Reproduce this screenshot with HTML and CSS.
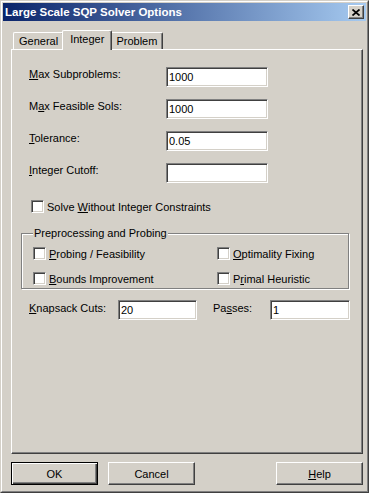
FILE: index.html
```html
<!DOCTYPE html>
<html lang="en">
<head>
    <meta charset="UTF-8">
    <title>Large Scale SQP Solver Options</title>
    <link rel="stylesheet" href="styles.css">
</head>
<body>
<div class="window">
    <div class="frame">
        <div class="titlebar">
            <span class="title">Large Scale SQP Solver Options</span>
            <span class="close-btn">
                <svg width="8" height="7" viewBox="0 0 8 7"><path d="M0.5 0.5 L7.5 6.5 M7.5 0.5 L0.5 6.5" stroke="#000" stroke-width="1.7"/></svg>
            </span>
        </div>

        <div class="content">
            <!-- Tabs -->
            <div class="tabs">
                <div class="tab">General</div>
                <div class="tab active">Integer</div>
                <div class="tab">Problem</div>
            </div>

            <div class="panel">
                <div class="fields">
                    <div class="field-row">
                        <span class="field-label"><u>M</u>ax Subproblems:</span>
                        <div class="input">1000</div>
                    </div>
                    <div class="field-row">
                        <span class="field-label">M<u>a</u>x Feasible Sols:</span>
                        <div class="input">1000</div>
                    </div>
                    <div class="field-row">
                        <span class="field-label"><u>T</u>olerance:</span>
                        <div class="input">0.05</div>
                    </div>
                    <div class="field-row">
                        <span class="field-label"><u>I</u>nteger Cutoff:</span>
                        <div class="input"></div>
                    </div>
                </div>

                <label class="check solo"><span class="box"></span><span>Solve <u>W</u>ithout Integer Constraints</span></label>

                <!-- Preprocessing group -->
                <fieldset class="group">
                    <legend>Preprocessing and Probing</legend>
                    <div class="group-grid">
                        <label class="check"><span class="box"></span><span><u>P</u>robing / Feasibility</span></label>
                        <label class="check"><span class="box"></span><span><u>O</u>ptimality Fixing</span></label>
                        <label class="check"><span class="box"></span><span><u>B</u>ounds Improvement</span></label>
                        <label class="check"><span class="box"></span><span>P<u>r</u>imal Heuristic</span></label>
                    </div>
                </fieldset>

                <div class="cuts-row">
                    <span class="cuts-label"><u>K</u>napsack Cuts:</span>
                    <div class="input cuts-input">20</div>
                    <span class="passes-label">Pa<u>s</u>ses:</span>
                    <div class="input passes-input">1</div>
                </div>
            </div>

            <div class="buttons">
                <button class="btn default">OK</button>
                <button class="btn">Cancel</button>
                <button class="btn help"><u>H</u>elp</button>
            </div>
        </div>
    </div>
</div>
</body>
</html>
```

FILE: styles.css
```css
* {
    box-sizing: border-box;
}
body {
    margin: 0;
    font-family: "Liberation Sans", Arial, sans-serif;
    font-size: 11px;
    color: #000;
    background-color: #d4d0c8;
}

/* Window frame */
.window {
    width: 369px;
    height: 493px;
    background-color: #d4d0c8;
    border: 1px solid;
    border-color: #d4d0c8 #404040 #404040 #d4d0c8;
}
.frame {
    height: 100%;
    border: 1px solid;
    border-color: #fff #808080 #808080 #fff;
    padding: 1px;
    display: flex;
    flex-direction: column;
}
.titlebar {
    height: 18px;
    display: flex;
    align-items: center;
    justify-content: space-between;
    padding: 0 2px;
    background: linear-gradient(to right, #0a246a, #a6caf0);
    color: #fff;
    font-size: 11.5px;
    font-weight: bold;
}
.close-btn {
    width: 16px;
    height: 14px;
    display: flex;
    align-items: center;
    justify-content: center;
    background-color: #d4d0c8;
    border: 1px solid;
    border-color: #fff #404040 #404040 #fff;
    box-shadow: inset -1px -1px #808080;
}
.content {
    flex: 1;
    display: flex;
    flex-direction: column;
    padding: 9px 3px 5px 8px;
}

/* Tabs */
.tabs {
    display: flex;
    align-items: flex-end;
    height: 19px;
    padding-left: 2px;
}
.tab {
    height: 17px;
    padding: 1px 5px 1px;
    line-height: 14px;
    border: 1px solid;
    border-bottom: none;
    border-color: #fff #404040 #404040 #fff;
    border-radius: 2px 2px 0 0;
    box-shadow: inset -1px 0 #808080;
}
.tab.active {
    position: relative;
    z-index: 1;
    height: 20px;
    margin: 0 -2px -1px;
    padding: 1px 7px 4px;
    background-color: #d4d0c8;
}
.panel {
    flex: 1;
    border: 1px solid;
    border-color: #fff #404040 #404040 #fff;
    box-shadow: inset -1px -1px #808080;
    padding: 17px 0 0 9px;
}

/* Text fields */
.fields {
    display: flex;
    flex-direction: column;
    gap: 12px;
}
.field-row {
    display: flex;
    align-items: flex-start;
    padding-left: 8px;
}
.field-label {
    width: 137px;
    line-height: 14px;
}
.input {
    width: 102px;
    height: 20px;
    background-color: #fff;
    border: 1px solid;
    border-color: #808080 #fff #fff #808080;
    box-shadow: inset 1px 1px #404040, inset -1px -1px #d4d0c8;
    padding: 0 1px 0 2px;
    line-height: 18px;
}

/* Checkboxes */
.check {
    display: flex;
    align-items: center;
    height: 13px;
    line-height: 14px;
    white-space: nowrap;
}
.check.solo {
    margin-top: 17px;
    padding-left: 10px;
}
.box {
    width: 13px;
    height: 13px;
    margin-right: 3px;
    background-color: #fff;
    border: 1px solid;
    border-color: #808080 #fff #fff #808080;
    box-shadow: inset 1px 1px #404040, inset -1px -1px #d4d0c8;
}

/* Group box */
.group {
    width: 328px;
    margin: 13px 0 0;
    padding: 7px 0 3px 11px;
    border: 1px solid #808080;
    box-shadow: inset 1px 1px #fff, 1px 1px #fff;
}
.group legend {
    padding: 0 1px;
    line-height: 14px;
    background-color: #d4d0c8;
}
.group-grid {
    display: grid;
    grid-template-columns: 184px auto;
    row-gap: 12px;
}

/* Knapsack row */
.cuts-row {
    display: flex;
    align-items: flex-start;
    margin-top: 11px;
    padding-left: 8px;
}
.cuts-label {
    width: 89px;
    line-height: 14px;
    padding-top: 1px;
}
.cuts-input {
    width: 79px;
}
.passes-label {
    width: 57px;
    margin-left: 16px;
    line-height: 14px;
    padding-top: 1px;
}
.passes-input {
    width: 80px;
}

/* Dialog buttons */
.buttons {
    display: flex;
    gap: 10px;
    margin-top: 8px;
}
.btn {
    width: 87px;
    height: 23px;
    padding: 0;
    font: inherit;
    color: #000;
    background-color: #d4d0c8;
    border: 1px solid;
    border-color: #fff #404040 #404040 #fff;
    box-shadow: inset -1px -1px #808080;
}
.btn.default {
    border-color: #000;
    box-shadow: inset 1px 1px #fff, inset -1px -1px #404040, inset -2px -2px #808080;
}
.btn.help {
    margin-left: auto;
}
```
